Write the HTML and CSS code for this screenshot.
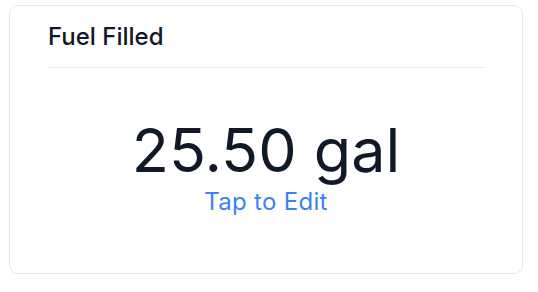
FILE: index.html
```html
<!DOCTYPE html>
<html lang="en">
<head>
  <meta charset="UTF-8">
  <title>Fuel Filled</title>
  <link rel="stylesheet" href="styles.css">
</head>
<body>
  <div class="card">
    <div class="card-header">Fuel Filled</div>
    <div class="card-body">
      <div class="value">25.50 gal</div>
      <div class="edit-link">Tap to Edit</div>
    </div>
  </div>
</body>
</html>
```

FILE: styles.css
```css
body { margin: 0; padding: 5px 0 0 9px; font-family: Inter, "Noto Sans", sans-serif; background: #fff; }
.card { width: 512px; height: 267px; box-sizing: content-box; border: 1px solid #e5e7eb; border-radius: 9px; background: #fff; }
.card-header { margin: 0 37px; padding: 16px 0 16px 1px; font-size: 24px; font-weight: 500; color: #111827; border-bottom: 1px solid #e5e7eb; }
.card-body { display: flex; flex-direction: column; align-items: center; padding-top: 46px; }
.value { font-size: 61px; font-weight: 400; color: #111827; line-height: 1.2; }
.edit-link { font-size: 24px; color: #3b82f6; letter-spacing: 0.3px; }
```
